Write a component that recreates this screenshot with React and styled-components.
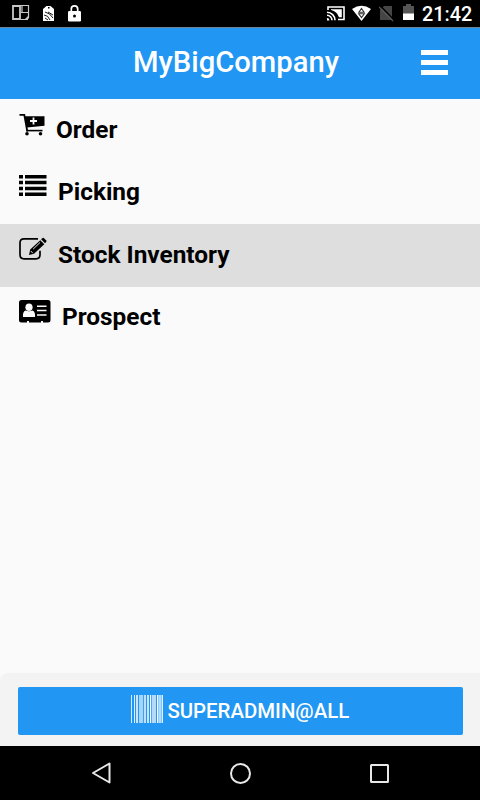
import React from 'react';
import styled, { createGlobalStyle } from 'styled-components';

const GlobalStyle = createGlobalStyle`
  * { box-sizing: border-box; }
  body { margin: 0; background: #000; font-family: Roboto, sans-serif; }
  svg { display: block; flex: none; }
`;

const Screen = styled.div`
  width: 480px;
  height: 800px;
  display: flex;
  flex-direction: column;
  background: #fafafa;
  overflow: hidden;
`;

const StatusBar = styled.div`
  height: 27px;
  flex: none;
  display: flex;
  justify-content: space-between;
  background: #000;
  color: #fff;
  padding: 0 8px 0 12px;
`;

const StatusGroup = styled.div`
  display: flex;
  gap: ${(p) => p.$gap}px;
  align-items: flex-start;
  padding-top: 4px;
`;

const Clock = styled.span`
  width: 50px;
  font-size: 19.8px;
  font-weight: 500;
  line-height: 22px;
  white-space: nowrap;
`;

const Header = styled.header`
  height: 72px;
  flex: none;
  display: grid;
  grid-template-columns: 59px 1fr 59px;
  align-items: center;
  background: #2196f3;
  border-top: 1px solid #6e8192;
  color: #fff;
`;

const Title = styled.h1`
  margin: 0;
  text-align: center;
  font-size: 29.2px;
  font-weight: 500;
  line-height: 34px;
  padding: 0 8px 4px 0;
`;

const MenuButton = styled.button`
  display: flex;
  flex-direction: column;
  gap: 5px;
  width: 27px;
  padding: 0 0 2px;
  border: 0;
  background: none;
`;

const MenuBar = styled.span`
  height: 5px;
  background: #fff;
`;

const List = styled.nav`
  flex: 1;
  display: grid;
  grid-template-rows: 62px 63px 63px 62px;
`;

const Item = styled.div`
  display: flex;
  align-items: flex-start;
  gap: 11px;
  padding: ${(p) => p.$top}px 0 0 19px;
  background: ${(p) => (p.$active ? '#dedede' : 'transparent')};
`;

const ItemLabel = styled.span`
  padding-top: 4px;
  color: #000;
  font-size: 24.4px;
  font-weight: 700;
  line-height: 28px;
  white-space: nowrap;
`;

const Footer = styled.footer`
  height: 73px;
  flex: none;
  padding: 14px 17px 11px 18px;
  background: #f3f3f3;
  border-top-left-radius: 8px;
`;

const AccountButton = styled.button`
  width: 100%;
  height: 48px;
  display: flex;
  align-items: center;
  justify-content: center;
  gap: 4.6px;
  border: 0;
  border-radius: 2px;
  background: #2196f3;
  color: #fff;
  font: 500 20.4px/24px Roboto, sans-serif;
  padding: 0 1px 0 0;
`;

const BarcodeSlot = styled.span`
  margin-bottom: 4px;
`;

const NavBar = styled.div`
  height: 54px;
  flex: none;
  display: flex;
  justify-content: space-between;
  align-items: center;
  padding: 0 91px 0 91px;
  background: #000;
`;

const ScreenIcon = () => (
  <svg width="18" height="18" viewBox="0 0 18 18" fill="none" stroke="#c8c8c8">
    <path d="M8 1.5H16.5V14L14 15.5H9M9 8.5H16M10 1V8" strokeWidth="1.2" />
    <path d="M1 2h7v13H1z" strokeWidth="1.8" />
    <path d="M12 16l4-4v4z" fill="#c8c8c8" stroke="none" />
  </svg>
);

const BatteryCastIcon = () => (
  <svg width="12" height="18" viewBox="0 0 12 18">
    <path d="M3.5 2h4L11 5v12H0V5z" fill="#fff" />
    <path d="M5 3h1.5v1.5H5z" fill="#000" />
    <path d="M2 8q5 1 8 6M1 11q4 0 6 5M2 14l3 2M5 8l5 3" fill="none" stroke="#000" strokeWidth=".9" />
  </svg>
);

const LockIcon = () => (
  <svg width="13" height="18" viewBox="0 0 13 18">
    <path d="M3.3 8V5a3.2 3.2 0 0 1 6.4 0v3" fill="none" stroke="#fff" strokeWidth="1.7" />
    <rect y="7" width="13" height="10.5" rx="1.2" fill="#fff" />
    <circle cx="6.5" cy="12" r="1.5" fill="#000" />
  </svg>
);

const CastIcon = () => (
  <svg width="18" height="18" viewBox="0 0 18 18" fill="none" stroke="#fff">
    <path d="M1 6V3h16v12.5h-6" strokeWidth="1.6" />
    <path d="M4 5.2h10.8v8H12Q10 7.2 4 6z" fill="#fff" stroke="none" />
    <path d="M0 8.3a8 8 0 0 1 8 8M0 11.3a5 5 0 0 1 5 5" strokeWidth="1.6" />
    <path d="M0 14a2.4 2.4 0 0 1 2.4 2.4H0z" fill="#fff" stroke="none" />
  </svg>
);

const WifiIcon = () => (
  <svg width="19" height="18" viewBox="0 0 19 18">
    <path d="M0 5Q9.5-1.4 19 5L9.5 17z" fill="#fff" />
    <path d="M9.5 4.5l2.6 3.7H6.9zM6.7 9.8h5.6l-2.8 3.8z" fill="#fff" stroke="#333" strokeWidth="1.1" />
  </svg>
);

const NoSimIcon = () => (
  <svg width="15" height="18" viewBox="0 0 15 18">
    <path d="M5 2h8v14H1V6z" fill="#454545" />
    <path d="M1 1.6l13.5 14" stroke="#000" strokeWidth="1.5" />
    <path d="M0 3l14 14" stroke="#5b5b5b" strokeWidth="1.2" />
  </svg>
);

const BatteryIcon = () => (
  <svg width="11" height="17" viewBox="0 0 11 17">
    <path d="M3 0h5v2h3v8H0V2h3z" fill="#555" />
    <path d="M0 9.5h11V16H0z" fill="#fff" />
  </svg>
);

const CartIcon = () => (
  <svg width="26" height="24" viewBox="0 0 26 24">
    <path d="M.5 2.8h4.8l3 16.7" fill="none" stroke="#000" strokeWidth="1.8" />
    <path d="M5.8 4.2H25.5v9.600L8 15.5z" />
    <path d="M7.5 18.6h16" stroke="#000" strokeWidth="1.6" />
    <path d="M14.5 5.5v7M11 9h7" stroke="#fafafa" strokeWidth="1.8" />
    <circle cx="8" cy="21.7" r="1.8" />
    <circle cx="21.5" cy="21.7" r="1.8" />
  </svg>
);

const ListIcon = () => (
  <svg width="28" height="24" viewBox="0 0 28 24">
    <path d="M0 1h4v3.5H0zM6 1h21.5v3.5H6zM0 6.8h4v3.5H0zM6 6.8h21.5v3.5H6zM0 12.8h4v3.5H0zM6 12.8h21.5v3.5H6zM0 18.5h4V22H0zM6 18.5h21.5V22H6z" />
  </svg>
);

const EditIcon = () => (
  <svg width="28" height="24" viewBox="0 0 28 24">
    <path d="M19 1.8H5Q1 1.8 1 5.8v12q0 4 4 4h12q4 0 4-4v-4" fill="none" stroke="#000" strokeWidth="1.7" />
    <path d="M10 18l1.2-5.5L21.3 3.2l4 4.1L15 16.8zM22.1 2.3l1.5-1.4q.6-.5 1.2 0l2.5 2.7q.6.6 0 1.2l-1.3 1.5z" />
    <path d="M14.1 12.2l7-6.8M11.8 14l2 2.2" stroke="#dedede" strokeWidth="1" />
  </svg>
);

const CardIcon = () => (
  <svg width="32" height="24" viewBox="0 0 32 24">
    <path d="M2.5 1h26.500Q31.500 1 31.500 3.500v17.500q0 2.500-2.500 2.500H24V22h-2v1.500H10V22H8v1.500H2.500Q0 23.500 0 21V3.500Q0 1 2.500 1z" />
    <ellipse cx="10" cy="8.300" rx="3.600" ry="3.800" fill="#fafafa" />
    <path d="M4 18q-.5-5.500 2.500-6.500 3.500 1.500 7 0 3 1 2.500 6.500z" fill="#fafafa" />
    <path d="M18 7.300h9.500M18 11.600h9.500M18 15.900h9.500" stroke="#fafafa" strokeWidth="1.500" />
  </svg>
);

const BARS = [
  [0, 1, 0.8], [3, 1, 0.85], [5, 2, 0.75], [8, 4.2, 0.6], [13, 2, 0.7],
  [16, 2, 0.75], [19, 1.2, 1], [21, 4, 0.65], [26, 1.5, 1], [28, 2, 0.65], [30.5, 1.5, 0.85],
];

const BarcodeIcon = () => (
  <svg width="32" height="28" viewBox="0 0 32 28" fill="#fff">
    {BARS.map(([x, width, opacity]) => (
      <rect key={x} x={x} width={width} height="28" opacity={opacity} />
    ))}
  </svg>
);

const BackIcon = () => (
  <svg width="20" height="24" viewBox="0 0 20 24">
    <path d="M18.5 2.5v19L2 12z" fill="none" stroke="#e8e8e8" strokeWidth="2" strokeLinejoin="round" />
  </svg>
);

const HomeIcon = () => (
  <svg width="22" height="22" viewBox="0 0 22 22">
    <circle cx="11.5" cy="11.5" r="9.5" fill="none" stroke="#e8e8e8" strokeWidth="2" />
  </svg>
);

const RecentIcon = () => (
  <svg width="20" height="20" viewBox="0 0 20 20">
    <rect x="2" y="2" width="17" height="17" rx=".5" fill="none" stroke="#e8e8e8" strokeWidth="2" />
  </svg>
);

const ITEMS = [
  { label: 'Order', Icon: CartIcon, top: 13 },
  { label: 'Picking', Icon: ListIcon, top: 13 },
  { label: 'Stock Inventory', Icon: EditIcon, top: 13, active: true },
  { label: 'Prospect', Icon: CardIcon, top: 12 },
];

const StatusPair = styled.div`
  display: flex;
  gap: ${(p) => p.$gap}px;
`;

export default function App() {
  return (
    <Screen>
      <GlobalStyle />
      <StatusBar>
        <StatusGroup $gap={13}>
          <ScreenIcon />
          <BatteryCastIcon />
          <LockIcon />
        </StatusGroup>
        <StatusGroup $gap={8}>
          <StatusPair $gap={7}>
            <CastIcon />
            <WifiIcon />
          </StatusPair>
          <StatusPair $gap={9}>
            <NoSimIcon />
            <BatteryIcon />
          </StatusPair>
          <Clock>21:42</Clock>
        </StatusGroup>
      </StatusBar>
      <Header>
        <span />
        <Title>MyBigCompany</Title>
        <MenuButton aria-label="Menu">
          <MenuBar />
          <MenuBar />
          <MenuBar />
        </MenuButton>
      </Header>
      <List>
        {ITEMS.map(({ label, Icon, top, active }) => (
          <Item key={label} $top={top} $active={active}>
            <Icon />
            <ItemLabel>{label}</ItemLabel>
          </Item>
        ))}
      </List>
      <Footer>
        <AccountButton>
          <BarcodeSlot>
            <BarcodeIcon />
          </BarcodeSlot>
          SUPERADMIN@ALL
        </AccountButton>
      </Footer>
      <NavBar>
        <BackIcon />
        <HomeIcon />
        <RecentIcon />
      </NavBar>
    </Screen>
  );
}
